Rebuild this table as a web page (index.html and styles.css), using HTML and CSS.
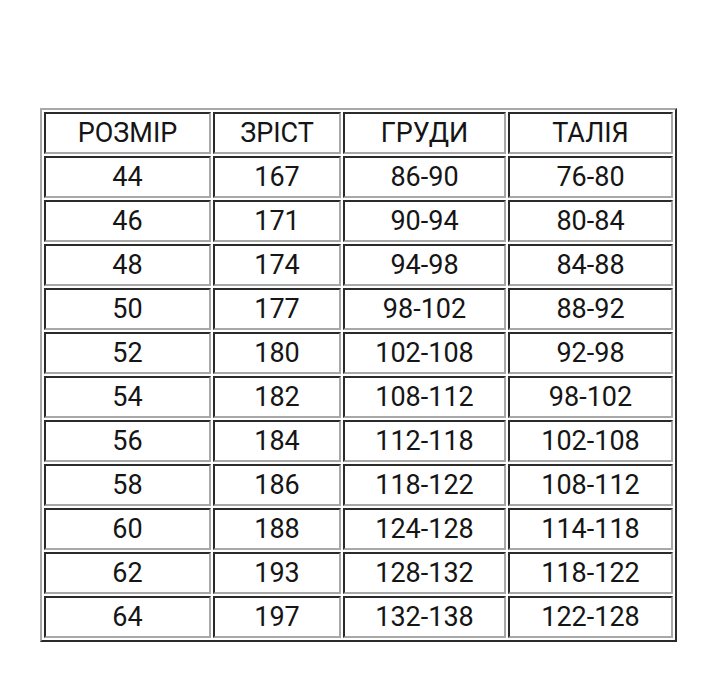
FILE: index.html
```html
<!DOCTYPE html>
<html lang="uk">
<head>
<meta charset="utf-8">
<link rel="stylesheet" href="styles.css">
</head>
<body>
<div class="page">
<table class="sizes">
<tr><td class="c1">РОЗМІР</td><td class="c2">ЗРІСТ</td><td class="c3">ГРУДИ</td><td class="c4">ТАЛІЯ</td></tr>
<tr><td>44</td><td>167</td><td>86-90</td><td>76-80</td></tr>
<tr><td>46</td><td>171</td><td>90-94</td><td>80-84</td></tr>
<tr><td>48</td><td>174</td><td>94-98</td><td>84-88</td></tr>
<tr><td>50</td><td>177</td><td>98-102</td><td>88-92</td></tr>
<tr><td>52</td><td>180</td><td>102-108</td><td>92-98</td></tr>
<tr><td>54</td><td>182</td><td>108-112</td><td>98-102</td></tr>
<tr><td>56</td><td>184</td><td>112-118</td><td>102-108</td></tr>
<tr><td>58</td><td>186</td><td>118-122</td><td>108-112</td></tr>
<tr><td>60</td><td>188</td><td>124-128</td><td>114-118</td></tr>
<tr><td>62</td><td>193</td><td>128-132</td><td>118-122</td></tr>
<tr><td>64</td><td>197</td><td>132-138</td><td>122-128</td></tr>
</table>
</div>
</body>
</html>
```
FILE: styles.css
```css
html, body {
  margin: 0;
  padding: 0;
  background: #ffffff;
}
.page {
  padding: 108px 0 0 40px;
}
.sizes {
  border-collapse: separate;
  border-spacing: 2px;
  border-style: solid;
  border-width: 2px;
  border-color: #a8a8a8 #2a2a2a #2a2a2a #a8a8a8;
  font-family: Roboto, "Liberation Sans", sans-serif;
  font-size: 27px;
  color: #151515;
}
.sizes td {
  box-sizing: border-box;
  height: 42px;
  padding: 0;
  text-align: center;
  vertical-align: middle;
  border-style: solid;
  border-width: 2px;
  border-color: #2a2a2a #a8a8a8 #a8a8a8 #2a2a2a;
  line-height: 36px;
}
.c1 { width: 167px; }
.c2 { width: 128px; }
.c3 { width: 163px; }
.c4 { width: 165px; }
```
